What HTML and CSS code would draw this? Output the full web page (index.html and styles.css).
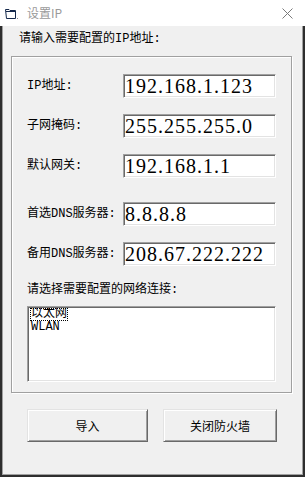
FILE: index.html
```html
<!DOCTYPE html>
<html lang="zh-CN">
<head>
<meta charset="utf-8">
<title>设置IP</title>
<link rel="stylesheet" href="styles.css">
</head>
<body>
<div class="window">
  <div class="titlebar">
    <svg class="app-icon" width="14" height="11" viewBox="0 0 14 11">
      <path d="M0.5 0.5 H4 L5 1.5 H10.5 V9.5 H1.5 Z" fill="none" stroke="#14284b"/>
      <path d="M1 2.5 H10" stroke="#14284b"/>
      <rect x="12" y="9" width="1" height="1" fill="#8a8a8a"/>
    </svg>
    <span class="title">设置IP</span>
    <svg class="close" width="11" height="11" viewBox="0 0 11 11">
      <path d="M0.5 0.5 L10.5 10.5 M10.5 0.5 L0.5 10.5" stroke="#7a7a7a" stroke-width="1"/>
    </svg>
  </div>
  <div class="client">
    <div class="prompt">请输入需要配置的IP地址:</div>
    <div class="group">
      <div class="row"><div class="lbl">IP地址:</div><div class="edit">192.168.1.123</div></div>
      <div class="row"><div class="lbl">子网掩码:</div><div class="edit">255.255.255.0</div></div>
      <div class="row"><div class="lbl">默认网关:</div><div class="edit">192.168.1.1</div></div>
      <div class="row row-sep"><div class="lbl">首选DNS服务器:</div><div class="edit">8.8.8.8</div></div>
      <div class="row"><div class="lbl">备用DNS服务器:</div><div class="edit">208.67.222.222</div></div>
      <div class="prompt2">请选择需要配置的网络连接:</div>
      <div class="listbox">
        <div class="item"><span class="focus">以太网</span></div>
        <div class="item">WLAN</div>
      </div>
    </div>
    <div class="buttons">
      <button class="btn btn-import">导入</button>
      <button class="btn btn-firewall">关闭防火墙</button>
    </div>
  </div>
</div>
</body>
</html>
```
FILE: styles.css
```css
html, body {
  margin: 0;
  padding: 0;
}
body {
  width: 305px;
  height: 477px;
  background: #2e2e2e;
  overflow: hidden;
}
.window {
  display: flex;
  flex-direction: column;
  width: 305px;
}
.titlebar {
  height: 26px;
  background: #ffffff;
  display: flex;
  align-items: center;
  box-sizing: border-box;
  padding-left: 5px;
}
.app-icon {
  display: block;
  margin-top: 2px;
}
.title {
  margin-left: 8px;
  font-family: "Noto Sans CJK SC", sans-serif;
  font-size: 12px;
  line-height: 12px;
  color: #9a9a9a;
}
.close {
  display: block;
  margin-left: auto;
  margin-right: 12px;
  margin-top: 1px;
}
.client {
  margin: 0 2px;
  height: 448px;
  background: #f0f0f0;
  border: 1px solid #a0a0a0;
  border-top: none;
  padding-left: 8px;
  display: flex;
  flex-direction: column;
  font-family: "Liberation Mono", "Noto Sans CJK SC", monospace;
  font-size: 12px;
  color: #000;
}
.prompt {
  margin-top: 7px;
  margin-left: 8px;
  line-height: 12px;
  height: 12px;
  white-space: nowrap;
}
.group {
  margin-top: 11px;
  width: 281px;
  box-sizing: border-box;
  border: 1px solid #a0a0a0;
  box-shadow: inset 1px 1px 0 #ffffff, 1px 1px 0 #ffffff;
  padding: 17px 15px 10px 15px;
  display: flex;
  flex-direction: column;
}
.row {
  display: flex;
  align-items: center;
  height: 24px;
  margin-bottom: 16px;
}
.row-sep {
  margin-top: 8px;
}
.lbl {
  width: 96px;
  line-height: 12px;
  white-space: nowrap;
}
.edit {
  width: 153px;
  height: 24px;
  box-sizing: border-box;
  background: #ffffff;
  border: 1px solid;
  border-color: #a0a0a0 #ffffff #ffffff #a0a0a0;
  box-shadow: inset 1px 1px 0 #696969, inset -1px -1px 0 #e3e3e3;
  padding: 1px 0 0 1px;
  font-family: "Liberation Serif", serif;
  font-size: 20px;
  line-height: 20px;
  letter-spacing: 1px;
  color: #000;
  white-space: nowrap;
  overflow: hidden;
}
.prompt2 {
  margin-top: 2px;
  line-height: 12px;
  height: 12px;
  white-space: nowrap;
}
.listbox {
  margin-top: 10px;
  width: 249px;
  height: 76px;
  box-sizing: border-box;
  background: #ffffff;
  border: 1px solid;
  border-color: #a0a0a0 #ffffff #ffffff #a0a0a0;
  box-shadow: inset 1px 1px 0 #696969, inset -1px -1px 0 #e3e3e3;
  padding: 1px 2px;
  overflow: hidden;
}
.item {
  line-height: 13px;
  height: 13px;
  padding-left: 1px;
  white-space: nowrap;
  overflow: hidden;
}
.focus {
  display: inline-block;
  vertical-align: top;
  height: 13px;
  box-sizing: border-box;
  line-height: 12px;
  outline: 1px dotted #000;
  outline-offset: -1px;
  padding: 0 1px;
  margin-left: -1px;
}
.buttons {
  margin-top: 16px;
  margin-left: 16px;
  display: flex;
  gap: 15px;
}
.btn {
  height: 33px;
  box-sizing: border-box;
  margin: 0;
  padding: 0;
  background: #f0f0f0;
  border: 1px solid;
  border-color: #e3e3e3 #696969 #696969 #e3e3e3;
  box-shadow: inset 1px 1px 0 #ffffff, inset -1px -1px 0 #a0a0a0;
  font-family: "Noto Sans CJK SC", sans-serif;
  font-size: 12px;
  line-height: 12px;
  color: #000;
}
.btn-import {
  width: 121px;
}
.btn-firewall {
  width: 114px;
}
```
